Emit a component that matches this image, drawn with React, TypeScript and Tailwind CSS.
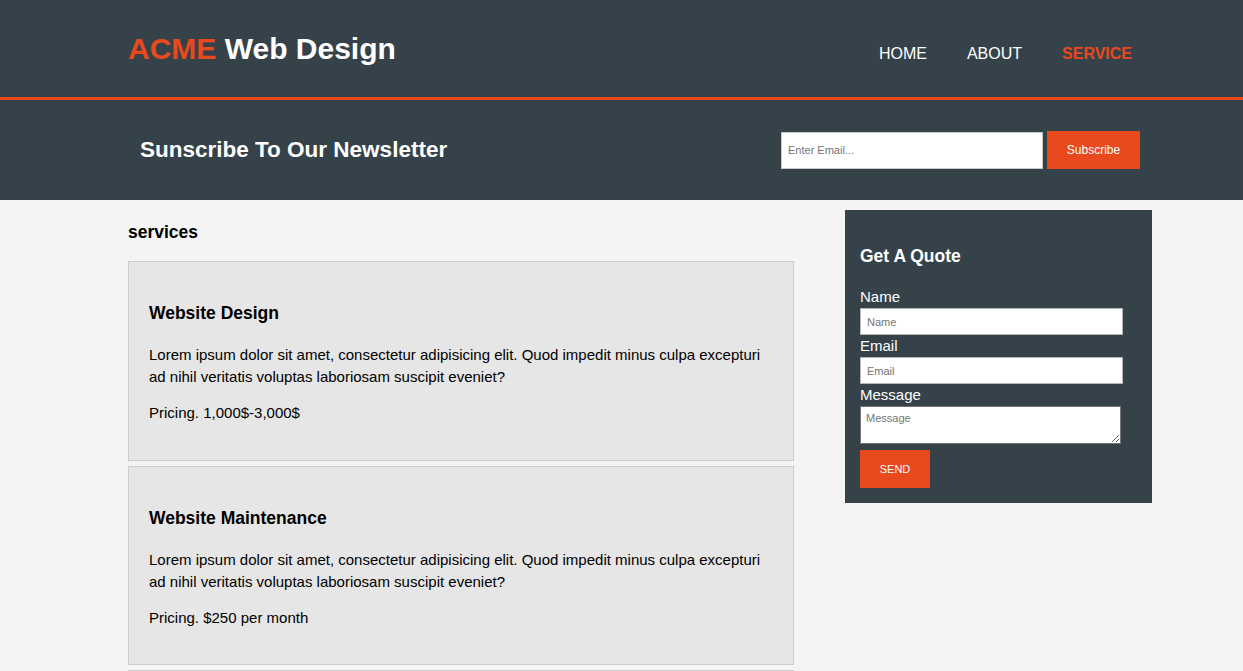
import React from "react";

const services = [
  { title: "Website Design", price: "Pricing. 1,000$-3,000$" },
  { title: "Website Maintenance", price: "Pricing. $250 per month" },
  { title: "Website Hosting", price: "Pricing. $25 per month" },
];

const lorem =
  "Lorem ipsum dolor sit amet, consectetur adipisicing elit. Quod impedit minus culpa excepturi ad nihil veritatis voluptas laboriosam suscipit eveniet?";

export default function App() {
  return (
    <div className="min-h-screen bg-[#f4f4f4] font-['Liberation_Sans',Arial,sans-serif] text-[15px] text-black">
      <header className="h-[100px] bg-[#35424a] border-b-[3px] border-[#e8491d] text-white">
        <div className="w-[1024px] ml-[128px] flex justify-between">
          <div className="pt-[31px] text-[30px] leading-[36px] font-bold">
            <span className="text-[#e8491d]">ACME</span> Web Design
          </div>
          <nav className="pt-[44px]">
            <ul className="flex text-[16px] leading-[20px] uppercase">
              <li className="px-[20px]">Home</li>
              <li className="px-[20px]">About</li>
              <li className="px-[20px] text-[#e8491d] font-bold">Service</li>
            </ul>
          </nav>
        </div>
      </header>

      <section className="h-[100px] bg-[#35424a] text-white">
        <div className="w-[1024px] ml-[128px] h-full flex items-center justify-between px-[12px]">
          <h1 className="text-[22.5px] leading-[26px] font-bold">Sunscribe To Our Newsletter</h1>
          <form className="flex items-center gap-[4px]">
            <input
              type="email"
              placeholder="Enter Email..."
              className="w-[262px] h-[37px] bg-white border border-[#c8c8c8] px-[6px] text-[11px] text-black placeholder:text-[#757575] outline-none"
            />
            <button
              type="button"
              className="w-[93px] h-[38px] bg-[#e8491d] text-white text-[12px]"
            >
              Subscribe
            </button>
          </form>
        </div>
      </section>

      <div className="w-[1024px] ml-[128px] flex items-start justify-between">
        <article className="w-[666px]">
          <h1 className="mt-[21px] mb-[18px] text-[17.5px] leading-[22px] font-bold">services</h1>
          <ul>
            {services.map((s) => (
              <li
                key={s.title}
                className="mb-[5px] bg-[#e6e6e6] border border-[#cccccc] px-[20px] pt-[40px] pb-[35.5px]"
              >
                <h3 className="text-[17.5px] leading-[22px] font-bold">{s.title}</h3>
                <p className="mt-[20px] leading-[22px]">{lorem}</p>
                <p className="mt-[14px] leading-[22px]">{s.price}</p>
              </li>
            ))}
          </ul>
        </article>

        <aside className="w-[307px] mt-[10px] bg-[#35424a] text-white p-[15px]">
          <h3 className="mt-[20px] mb-[19px] text-[17.5px] leading-[22px] font-bold">Get A Quote</h3>
          <form>
            <label className="block leading-[22px]">Name</label>
            <input
              type="text"
              placeholder="Name"
              className="block w-[263px] h-[27px] bg-white border border-[#b5b5b5] px-[6px] text-[11px] text-black placeholder:text-[#757575] outline-none"
            />
            <label className="block leading-[22px]">Email</label>
            <input
              type="email"
              placeholder="Email"
              className="block w-[263px] h-[27px] bg-white border border-[#b5b5b5] px-[6px] text-[11px] text-black placeholder:text-[#757575] outline-none"
            />
            <label className="block leading-[22px]">Message</label>
            <textarea
              placeholder="Message"
              className="block w-[261px] h-[38px] bg-white border border-[#767676] px-[5px] pt-[4px] text-[11px] leading-[14px] text-black placeholder:text-[#757575] outline-none"
            />
            <button
              type="button"
              className="mt-[6px] block w-[70px] h-[38px] bg-[#e8491d] text-white text-[11px]"
            >
              SEND
            </button>
          </form>
        </aside>
      </div>
    </div>
  );
}
